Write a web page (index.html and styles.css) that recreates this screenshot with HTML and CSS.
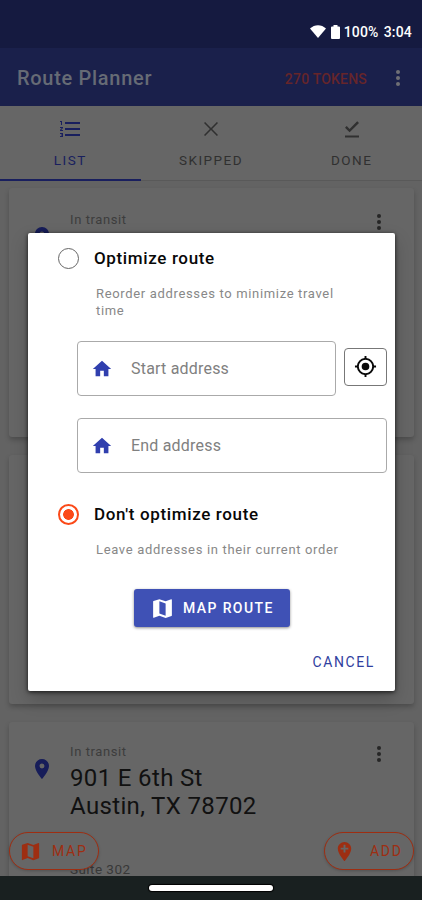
FILE: index.html
```html
<!DOCTYPE html>
<html lang="en">
<head>
<meta charset="utf-8">
<title>Route Planner</title>
<link rel="stylesheet" href="styles.css">
</head>
<body>
<svg class="defs" width="0" height="0">
  <symbol id="map" viewBox="0 0 24 24"><path d="M20.5 3l-.16.03L15 5.1 9 3 3.36 4.9c-.21.07-.36.25-.36.48V20.500c0 .28.22.5.5.5l.16-.03L9 18.900l6 2.100 5.640-1.900c.21-.07.36-.25.36-.48V3.500c0-.28-.22-.5-.5-.5zM15 19l-6-2.110V5l6 2.110V19z"/></symbol>
  <symbol id="home" viewBox="0 0 24 24"><path d="M10 20v-6h4v6h5v-8h3L12 3 2 12h3v8z"/></symbol>
  <symbol id="pin" viewBox="0 0 24 24"><path d="M12 2C8.130 2 5 5.130 5 9c0 5.250 7 13 7 13s7-7.750 7-13c0-3.870-3.130-7-7-7zm0 9.500a2.500 2.500 0 0 1 0-5 2.500 2.500 0 0 1 0 5z"/></symbol>
  <symbol id="more" viewBox="0 0 24 24"><circle cx="12" cy="6" r="2"/><circle cx="12" cy="12" r="2"/><circle cx="12" cy="18" r="2"/></symbol>
</svg>
<div class="screen">
  <header class="status">
    <svg class="wifi" viewBox="0 0 16 14"><path d="M0 3.500C4.500-1 11.500-1 16 3.500L8 13z"/></svg>
    <svg class="battery" viewBox="0 0 9 14"><path d="M2.500 1.500V0h4v1.500H8a1 1 0 0 1 1 1V13a1 1 0 0 1-1 1H1a1 1 0 0 1-1-1V2.500a1 1 0 0 1 1-1z"/></svg>
    <span class="percent">100%</span><span class="clock">3:04</span>
  </header>
  <div class="appbar">
    <h1 class="title">Route Planner</h1>
    <span class="tokens">270 TOKENS</span>
    <svg class="more"><use href="#more"/></svg>
  </div>
  <nav class="tabs">
    <div class="tab active">
      <svg viewBox="0 0 24 24"><path d="M2 17h2v.5H3v1h1v.5H2v1h3v-4H2v1zm1-9h1V4H2v1h1v3zm-1 3h1.800L2 13.100v.9h3v-1H3.200L5 10.900V10H2v1zm5-6v2h15V5H7zm0 14h15v-2H7v2zm0-6h15v-2H7v2z"/></svg>
      <span>LIST</span>
    </div>
    <div class="tab">
      <svg viewBox="0 0 24 24"><path d="M19 6.100L17.900 5 12 10.900 6.100 5 5 6.100 10.900 12 5 17.900 6.100 19 12 13.100 17.900 19 19 17.900 13.100 12z"/></svg>
      <span>SKIPPED</span>
    </div>
    <div class="tab">
      <svg viewBox="0 0 24 24"><path d="M5 18.500h14v2H5v-2zm4.600-3.200L5 10.700l1.700-1.700 2.900 2.900L17.200 4.300 19 6l-9.400 9.300z"/></svg>
      <span>DONE</span>
    </div>
  </nav>
  <main class="list">
    <article class="card">
      <svg class="pin"><use href="#pin"/></svg>
      <div class="stop"><span class="state">In transit</span></div>
      <svg class="more"><use href="#more"/></svg>
    </article>
    <article class="card"></article>
    <article class="card last">
      <svg class="pin"><use href="#pin"/></svg>
      <div class="stop">
        <span class="state">In transit</span>
        <span class="address">901 E 6th St<br>Austin, TX 78702</span>
        <span class="unit">Suite 302</span>
      </div>
      <svg class="more"><use href="#more"/></svg>
    </article>
  </main>
  <footer class="navbar"><span class="handle"></span></footer>

  <div class="fabs">
    <button class="fab fab-map"><svg><use href="#map"/></svg>MAP</button>
    <button class="fab fab-add"><svg viewBox="0 0 24 24"><path d="M12 2C8.140 2 5 5.140 5 9c0 5.250 7 13 7 13s7-7.750 7-13c0-3.860-3.140-7-7-7zm4 8h-3v3h-2v-3H8V8h3V5h2v3h3v2z"/></svg>ADD</button>
  </div>

  <section class="dialog">
    <div class="option">
      <span class="radio"></span>
      <div><h2>Optimize route</h2><p>Reorder addresses to minimize travel<br>time</p></div>
    </div>
    <div class="fields">
      <div class="row">
        <div class="field"><svg><use href="#home"/></svg><span>Start address</span></div>
        <button class="locate"><svg viewBox="0 0 24 24"><path d="M12 8a4 4 0 1 0 0 8 4 4 0 0 0 0-8zm8.940 3A8.990 8.990 0 0 0 13 3.060V1h-2v2.060A8.990 8.990 0 0 0 3.060 11H1v2h2.060A8.990 8.990 0 0 0 11 20.940V23h2v-2.060A8.990 8.990 0 0 0 20.940 13H23v-2h-2.060zM12 19a7 7 0 1 1 0-14 7 7 0 0 1 0 14z"/></svg></button>
      </div>
      <div class="row"><div class="field"><svg><use href="#home"/></svg><span>End address</span></div></div>
    </div>
    <div class="option second">
      <span class="radio checked"></span>
      <div><h2>Don't optimize route</h2><p>Leave addresses in their current order</p></div>
    </div>
    <button class="primary"><svg><use href="#map"/></svg>MAP ROUTE</button>
    <button class="cancel">CANCEL</button>
  </section>
</div>
</body>
</html>
```
FILE: styles.css
```css
* { box-sizing: border-box; }
body { margin: 0; font-family: Roboto, "Liberation Sans", sans-serif; }
h1, h2, p { margin: 0; }
button { font: inherit; background: none; border: 0; padding: 0; }
svg { fill: currentColor; flex: none; display: block; }
.defs { position: absolute; }
.screen { position: relative; width: 422px; height: 900px; overflow: hidden; background: #636363; display: flex; flex-direction: column; }

.status { height: 48px; flex: none; background: #151a40; color: #fff; display: flex; align-items: center; justify-content: flex-end; padding: 16px 10px 0 0; font-size: 14px; font-weight: 500; letter-spacing: .2px; }
.wifi { width: 16px; height: 14px; margin-right: 5px; }
.battery { width: 9px; height: 14px; margin-right: 4px; }
.clock { margin-left: 5px; }

.appbar { height: 58px; flex: none; background: #1a204b; display: flex; align-items: center; padding: 0 12px 0 17px; color: #666b75; }
.title { font-size: 20px; font-weight: 500; letter-spacing: .7px; flex: 1; padding-top: 1px; }
.tokens { color: #66252a; font-size: 14px; font-weight: 500; letter-spacing: .2px; margin-right: 19px; padding-top: 4px; }
.more { width: 24px; height: 24px; }
.appbar .more { color: #6f6f75; margin-top: 2px; }

.tabs { height: 75px; flex: none; background: #666; display: flex; border-bottom: 1px solid #595959; }
.tab { flex: 1; height: 75px; display: flex; flex-direction: column; align-items: center; padding-top: 11px; color: #303030; font-size: 13.500px; line-height: 16px; font-weight: 400; letter-spacing: 1.500px; }
.tab svg { width: 24px; height: 24px; margin-bottom: 11px; }
.tab.active { color: #191f5e; border-bottom: 2px solid #191f5e; }

.list { flex: 1; min-height: 0; overflow: hidden; padding: 7px 8px 0 9px; display: flex; flex-direction: column; gap: 18px; }
.card { height: 249px; flex: none; background: #666; border-radius: 3px; box-shadow: 0 3px 5px rgba(0,0,0,.22); display: flex; padding: 24px 23px 0 21px; color: #272727; }
.card.last { padding-top: 22px; }
.pin { width: 24px; height: 24px; color: #171d59; margin-top: 13px; }
.stop { flex: 1; display: flex; flex-direction: column; padding-left: 16px; }
.state { font-size: 13px; line-height: 16px; letter-spacing: .6px; color: #3d3d3d; }
.card .more { color: #262626; margin-top: -2px; }
.address { font-size: 24px; line-height: 28px; letter-spacing: .35px; color: #111; margin-top: 4px; }
.unit { font-size: 13.500px; line-height: 16px; letter-spacing: .45px; margin-top: 41px; color: #383838; }

.navbar { height: 24px; flex: none; background: #192020; display: flex; align-items: center; justify-content: center; }
.handle { width: 124px; height: 6px; border-radius: 3px; background: #fff; box-shadow: 0 0 1px 1px #000; }

.fabs { position: absolute; left: 9px; right: 8px; bottom: 30px; display: flex; justify-content: space-between; }
.fab { height: 38px; width: 90px; border: 1.500px solid #9e2e12; border-radius: 19px; background: #666; color: #9e2e12; display: flex; align-items: center; font-size: 14px; font-weight: 400; letter-spacing: 1.700px; padding-left: 9px; box-shadow: 0 1px 3px rgba(0,0,0,.2); }
.fab svg { width: 23px; height: 23px; margin-right: 10px; }
.fab-add { padding-left: 8px; }
.fab-add svg { margin-right: 14px; }

.dialog { position: absolute; left: 28px; top: 233px; width: 367px; height: 458px; background: #fff; border-radius: 2px; box-shadow: 0 1px 4px rgba(0,0,0,.75), 0 8px 18px rgba(0,0,0,.22); padding-top: 15px; display: flex; flex-direction: column; }
.option { display: flex; padding: 0 38px 0 30px; gap: 15px; }
.radio { flex: none; width: 21px; height: 21px; border: 1.500px solid #666; border-radius: 50%; }
.radio.checked { border: 2px solid #fb4918; background: radial-gradient(circle, #fb4918 0 5px, transparent 5.700px); }
.option h2 { font-size: 17px; line-height: 20px; font-weight: 500; color: #080808; letter-spacing: .64px; white-space: nowrap; }
.option p { font-size: 13px; line-height: 17px; color: #888; letter-spacing: .66px; margin: 17px 0 0 2px; white-space: nowrap; }
.fields { margin: 22px 8px 0 49px; display: flex; flex-direction: column; gap: 22px; }
.row { display: flex; gap: 8px; align-items: center; }
.field { flex: 1; height: 55px; border: 1px solid #aaa; border-radius: 4px; display: flex; align-items: center; padding-left: 13px; color: #808080; font-size: 16px; letter-spacing: .2px; }
.field svg { width: 22px; height: 22px; color: #303fae; margin-right: 18px; }
.locate { width: 43px; height: 38px; margin-top: -4px; border: 1px solid #777; border-radius: 4px; display: grid; place-items: center; color: #080808; }
.locate svg { width: 23px; height: 23px; }
.second { margin-top: 31px; }
.primary { width: 156px; height: 38px; flex: none; margin: 31px 0 0 106px; background: #3f51b5; color: #fff; border-radius: 3px; box-shadow: 0 1px 3px rgba(0,0,0,.45); display: flex; align-items: center; padding-left: 16px; font-size: 14px; font-weight: 500; letter-spacing: 1.400px; }
.primary svg { width: 25px; height: 25px; margin-right: 8px; }
.cancel { align-self: flex-end; margin: 27px 20px 0 0; color: #303f9f; font-size: 14px; line-height: 16px; font-weight: 400; letter-spacing: 1.600px; }
```
